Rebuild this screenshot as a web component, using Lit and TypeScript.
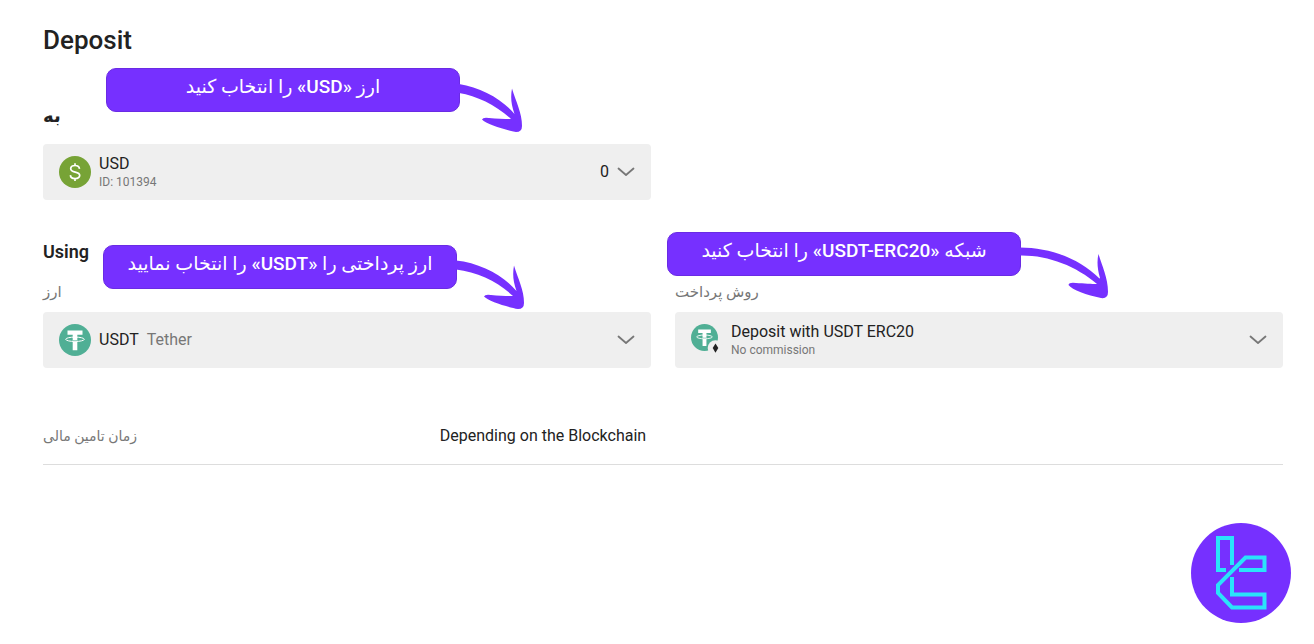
import { LitElement, html, css, svg } from "lit";
import { customElement, property } from "lit/decorators.js";

const chevron = html`<svg class="chevron" viewBox="0 0 18 10" width="18" height="10" aria-hidden="true">
  <path d="M1.5 1.5 9 8 16.5 1.5" fill="none" stroke="#777" stroke-width="1.8" stroke-linecap="round" stroke-linejoin="round" />
</svg>`;

const tetherMark = svg`
  <circle cx="16" cy="16" r="16" fill="#50af95" />
  <path d="M8.500 6.500h15v4.300h-5.200v15.400h-4.600V10.800H8.500z" fill="#fff" />
  <ellipse cx="16" cy="15.300" rx="9.300" ry="2.200" fill="none" stroke="#fff" stroke-width="1" />
  <path d="M13.700 16.600q2.300.3 4.600 0" fill="none" stroke="#50af95" stroke-width="0.700" />`;

const tetherIcon = html`<svg viewBox="0 0 32 32" width="32" height="32" aria-hidden="true">${tetherMark}</svg>`;

const tetherErcIcon = html`<svg viewBox="0 0 32 32" width="32" height="32" aria-hidden="true">
  <svg viewBox="0 0 32 32" width="27" height="27">${tetherMark}</svg>
  <circle cx="24.500" cy="24" r="7.800" fill="#efefef" />
  <path d="M24.500 19.500 27.300 24 24.500 28.800 21.700 24z" fill="#222" />
</svg>`;

const dollarIcon = html`<svg viewBox="0 0 32 32" width="32" height="32" aria-hidden="true">
  <circle cx="16" cy="16" r="16" fill="#77a336" />
  <path d="M20.500 12.900c-.2-2.200-1.900-3.400-4.400-3.400-2.600 0-4.400 1.300-4.400 3.300 0 4.500 9 2 9 6.500 0 2-1.900 3.300-4.600 3.300-2.700 0-4.600-1.300-4.700-3.500M16 7.200v2.600M16 22.400v2.600" fill="none" stroke="#fff" stroke-width="1.700" />
</svg>`;

type Reach = "short" | "medium" | "long";

const arrows: Record<Reach, { width: number; path: string }> = {
  short: {
    width: 64,
    path: "M0 16C22 20 42 30 55.500 46C52 36 51.500 29 53 20.500C57 34 63 45 63 58Q63 64 57 64C46 62 27 56 23 51.500Q24 49 30 50C38 51 46 51 52 51C37 37 18 28 0 25Z",
  },
  medium: {
    width: 69,
    path: "M0 15.500C24 18 47 30 60.500 46C57 36 56.500 29 58 20.500C62 34 68 45 68 58Q68 64 62 64C51 62 32 56 28 51.500Q29 49 35 50C43 51 51 51 57 51C42 37 22 27 0 24.500Z",
  },
  long: {
    width: 89,
    path: "M0 15.500C29 15.500 59 26 79.500 46.500L80 46C77 36 77 28 78.500 22C82 34 88 46 88 60Q88 67 81 66C67 63 52 58 48.500 53Q49 50 56 51C64 51.500 72 52 77 52C56 34 28 23 0 23.500Z",
  },
};

@customElement("callout-note")
class CalloutNote extends LitElement {
  @property() reach: Reach = "short";

  static styles = css`
    :host { display: flex; align-items: flex-start; }
    .box {
      box-sizing: border-box;
      width: 354px;
      height: 44px;
      border: 1px solid #6a2be4;
      border-radius: 10px;
      background: #7630ff;
      color: #fff;
      font: 500 19px/36px Roboto, "DejaVu Sans", sans-serif;
      text-align: center;
      white-space: nowrap;
    }
    .arrow { display: block; margin-left: -1px; overflow: visible; }
  `;

  render() {
    const arrow = arrows[this.reach];
    return html`<div class="box" dir="rtl"><slot></slot></div>
      <svg class="arrow" width=${arrow.width} height="68" aria-hidden="true"><path d=${arrow.path} fill="#7630ff" /></svg>`;
  }
}

@customElement("app-root")
class AppRoot extends LitElement {
  static styles = css`
    :host { display: block; min-height: 100vh; background: #fff; color: #222; font: 400 16px/20px Roboto, "DejaVu Sans", sans-serif; }
    main { position: relative; box-sizing: border-box; min-height: 100vh; padding: 24px 31px 20px 43px; }
    h1 { margin: 0; font-size: 26px; line-height: 32px; font-weight: 500; }
    h2 { margin: 0; font-size: 18px; line-height: 24px; font-weight: 600; }
    section { position: relative; }
    .to { padding-top: 48px; }
    .using { padding-top: 40px; }
    .grid { display: grid; grid-template-columns: 1fr 1fr; column-gap: 24px; padding-top: 16px; }
    .field { position: relative; display: grid; row-gap: 8px; }
    .label { color: #777; font-size: 15px; line-height: 24px; }
    .select {
      display: flex; align-items: center; width: 100%; height: 56px; padding: 0 16px;
      border: 0; border-radius: 4px; background: #efefef; color: inherit; font: inherit; text-align: start; cursor: pointer;
    }
    .select svg { flex: none; }
    .texts { display: grid; flex: 1; padding-left: 8px; }
    .inline { display: flex; flex: 1; gap: 8px; padding-left: 8px; }
    .muted { color: #777; }
    .small { color: #777; font-size: 12px; line-height: 16px; }
    .chevron { margin-left: 8px; }
    .callout { position: absolute; z-index: 1; }
    .callout.currency { left: 63px; top: 12px; }
    .callout.coin { left: 60px; top: 45px; }
    .callout.network { left: -8px; top: -48px; }
    .facts { display: grid; grid-template-columns: 8fr 17fr; margin: 48px 0 0; padding: 10px 0 18px; border-bottom: 1px solid #ddd; }
    dt { color: #777; font-size: 14px; }
    dd { margin: 0; }
    .brand { position: absolute; right: 23px; bottom: 21px; display: block; }
  `;

  render() {
    return html`<main>
      <h1>Deposit</h1>
      <section class="to">
        <callout-note class="callout currency">ارز «USD» را انتخاب کنید</callout-note>
        <h2 id="to">به</h2>
        <div class="grid">
          <button class="select" aria-haspopup="listbox" aria-labelledby="to account">
            ${dollarIcon}
            <span class="texts" id="account"><span>USD</span><span class="small">ID: 101394</span></span>
            <span>0</span>${chevron}
          </button>
        </div>
      </section>
      <section class="using">
        <callout-note class="callout coin" reach="medium">ارز پرداختی را «USDT» را انتخاب نمایید</callout-note>
        <h2>Using</h2>
        <div class="grid">
          <div class="field">
            <span class="label" id="coin">ارز</span>
            <button class="select" aria-haspopup="listbox" aria-labelledby="coin coin-value">
              ${tetherIcon}
              <span class="inline" id="coin-value"><span>USDT</span><span class="muted">Tether</span></span>
              ${chevron}
            </button>
          </div>
          <div class="field">
            <callout-note class="callout network" reach="long">شبکه «USDT-ERC20» را انتخاب کنید</callout-note>
            <span class="label" id="method">روش پرداخت</span>
            <button class="select" aria-haspopup="listbox" aria-labelledby="method method-value">
              ${tetherErcIcon}
              <span class="texts" id="method-value"><span>Deposit with USDT ERC20</span><span class="small">No commission</span></span>
              ${chevron}
            </button>
          </div>
        </div>
      </section>
      <dl class="facts">
        <dt>زمان تامین مالی</dt>
        <dd>Depending on the Blockchain</dd>
      </dl>
      <svg class="brand" width="100" height="100" viewBox="0 0 100 100" role="img" aria-label="Brand">
        <circle cx="50" cy="50" r="50" fill="#7630ff" />
        <g fill="none" stroke="#2ae3fa" stroke-width="4">
          <path d="M35 47H27V15h14v27" />
          <path d="M48 47H73.500V34.500H54.500L27 62V70L41 84.500H73.500V71.500H41V54" />
        </g>
      </svg>
    </main>`;
  }
}
